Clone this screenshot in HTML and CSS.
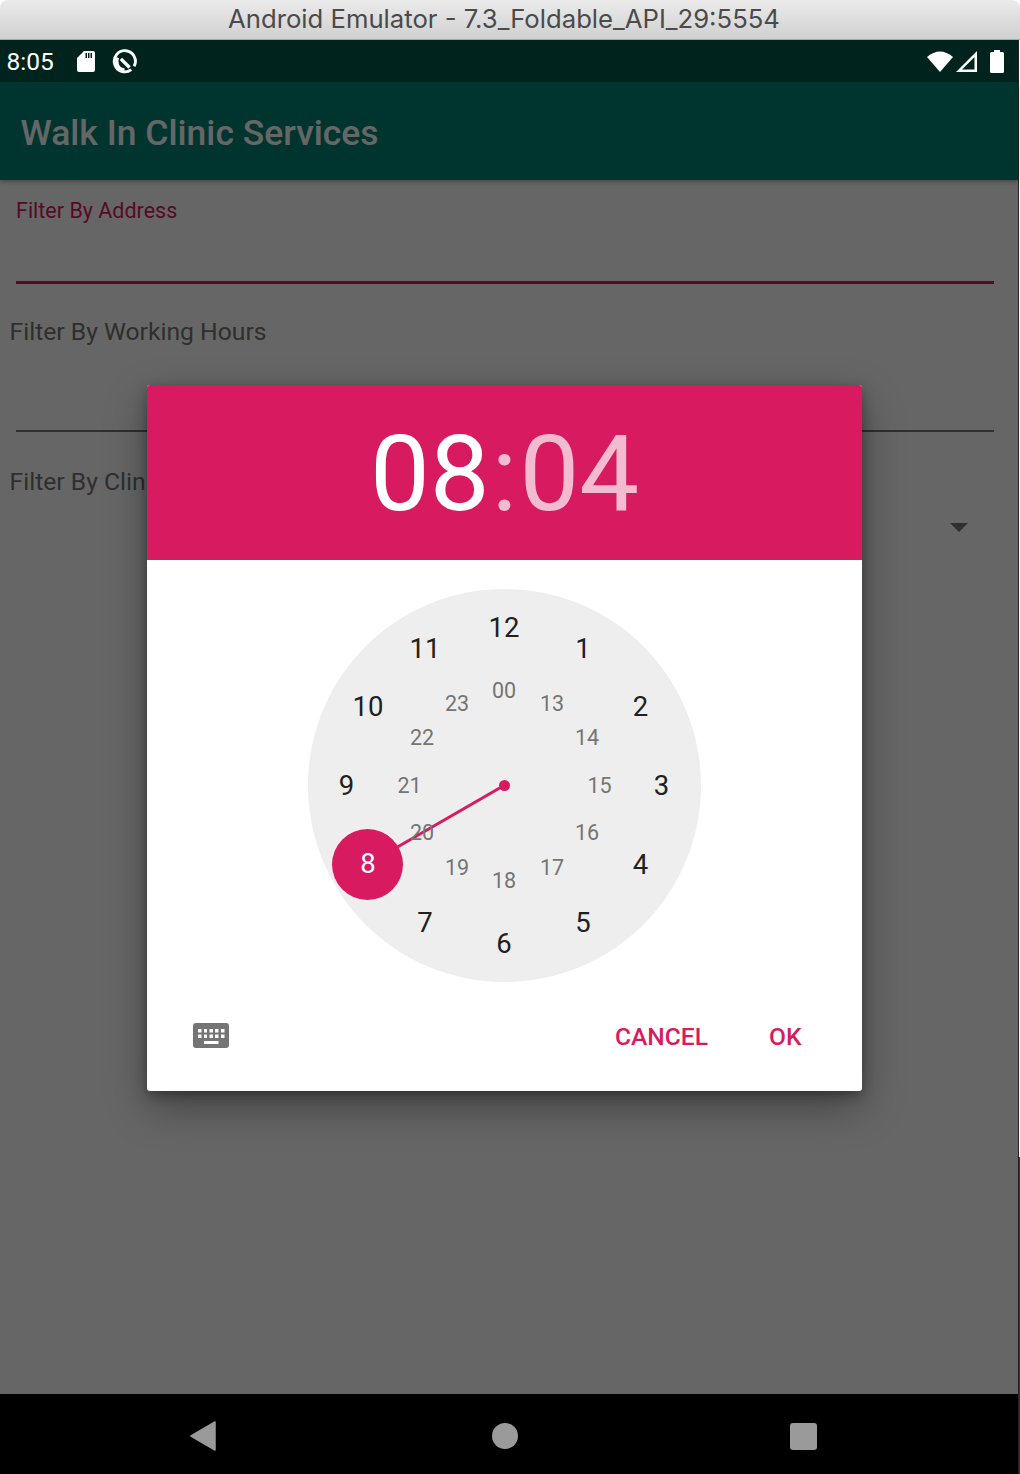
FILE: index.html
```html
<!DOCTYPE html>
<html lang="en">
<head>
    <meta charset="UTF-8">
    <meta name="viewport" content="width=device-width, initial-scale=1.0">
    <title>Android Emulator</title>
    <link rel="stylesheet" href="styles.css">
</head>
<body>
    <div class="window-title">Android Emulator - 7.3_Foldable_API_29:5554</div>

    <div class="device">
        <div class="status-bar">
            <span class="clock-text">8:05</span>
            <svg class="icon-sd" width="18" height="21" viewBox="0 0 18 21">
                <path fill="#fff" fill-rule="evenodd" d="M7 0H16a2 2 0 0 1 2 2V19a2 2 0 0 1-2 2H2a2 2 0 0 1-2-2V7zM8.500 2V7H10V2zM11 2V7H12.500V2zM13.500 2V7H15V2z"/>
            </svg>
            <svg class="icon-q" width="25" height="25" viewBox="0 0 26 26">
                <path fill="none" stroke="#fff" stroke-width="3" d="M20 21.500A11 11 0 1 1 23 18"/>
                <path fill="none" stroke="#fff" stroke-width="3" d="M13 21.500A8.500 8.500 0 0 1 6 9"/>
                <path fill="#fff" d="M8 11.500L10.500 9L19.500 18L17 20.500z"/>
            </svg>
            <div class="status-right">
                <svg class="icon-wifi" width="26" height="21" viewBox="0 0 26 21"><path fill="#fff" d="M0 6Q13-5 26 6L13 21z"/></svg>
                <svg class="icon-signal" width="21" height="21" viewBox="0 0 21 21"><path fill="#fff" fill-rule="evenodd" d="M21 0V21H0zM18.500 6L6 18.500H18.500z"/></svg>
                <svg width="14" height="23" viewBox="0 0 14 23"><path fill="#fff" d="M4 2V0H10V2H12.500A1.500 1.500 0 0 1 14 3.500V21.500A1.500 1.500 0 0 1 12.500 23H1.500A1.500 1.500 0 0 1 0 21.500V3.500A1.500 1.500 0 0 1 1.500 2z"/></svg>
            </div>
        </div>

        <div class="screen">
            <div class="app-bar">Walk In Clinic Services</div>
            <div class="form">
                <div class="field-address">
                    <div class="label-pink">Filter By Address</div>
                </div>
                <div class="label">Filter By Working Hours</div>
                <div class="field-hours"></div>
                <div class="label">Filter By Clinic</div>
                <div class="spinner"><span class="arrow"></span></div>
            </div>

            <div class="scrim">
                <div class="dialog">
                    <div class="dialog-head">
                        <span class="time-on">08</span><span class="time-colon">:</span><span class="time-off">04</span>
                    </div>
                    <div class="dialog-body">
                        <div class="dial">
                            <div class="hand"></div>
                            <div class="hand-dot"></div>
                            <span class="num in p00">00</span>
                            <span class="num in p13">13</span>
                            <span class="num in p14">14</span>
                            <span class="num in p15">15</span>
                            <span class="num in p16">16</span>
                            <span class="num in p17">17</span>
                            <span class="num in p18">18</span>
                            <span class="num in p19">19</span>
                            <span class="num in p20">20</span>
                            <span class="num in p21">21</span>
                            <span class="num in p22">22</span>
                            <span class="num in p23">23</span>
                            <span class="num p12">12</span>
                            <span class="num p1">1</span>
                            <span class="num p2">2</span>
                            <span class="num p3">3</span>
                            <span class="num p4">4</span>
                            <span class="num p5">5</span>
                            <span class="num p6">6</span>
                            <span class="num p7">7</span>
                            <span class="selected">8</span>
                            <span class="num p9">9</span>
                            <span class="num p10">10</span>
                            <span class="num p11">11</span>
                        </div>
                    </div>
                    <div class="dialog-actions">
                        <svg class="icon-keyboard" width="36" height="26" viewBox="0 0 36 26">
                            <path fill="#757575" fill-rule="evenodd" d="M3 0H33a3 3 0 0 1 3 3V22a3 3 0 0 1-3 3H3a3 3 0 0 1-3-3V3a3 3 0 0 1 3-3zM5 6V9.500H8.500V6zM11 6V9.500H14V6zM16.500 6V9.500H20V6zM22 6V9.500H25.500V6zM28 6V9.500H31.500V6zM5 11.500V15H8.500V11.500zM11 11.500V15H14V11.500zM16.500 11.500V15H20V11.500zM22 11.500V15H25.500V11.500zM28 11.500V15H31.500V11.500zM11 18V21H25.500V18z"/>
                        </svg>
                        <span class="btn btn-cancel">CANCEL</span>
                        <span class="btn btn-ok">OK</span>
                    </div>
                </div>
            </div>
        </div>

        <div class="nav-bar">
            <svg class="nav-back" width="26" height="30" viewBox="0 0 26 30"><path fill="#9a9a9a" d="M25 1V29L1 15z" stroke="#9a9a9a" stroke-width="1.500" stroke-linejoin="round"/></svg>
            <div class="nav-home"></div>
            <div class="nav-recent"></div>
        </div>
    </div>
</body>
</html>
```

FILE: styles.css
```css
* {
    box-sizing: border-box;
}

body {
    margin: 0px;
    padding: 0px;
    height: 1474px;
    overflow: hidden;
    background: linear-gradient(#fff 1157px, #333 1157px);
    font-family: Roboto, "Liberation Sans", sans-serif;
    display: flex;
    flex-direction: column;
}

.window-title {
    height: 40px;
    background: linear-gradient(#ebebeb, #d0d0d0);
    border-bottom: 1px solid #a8a8a8;
    border-radius: 8px 8px 0 0;
    color: #4a4a4a;
    font-family: Inter, "Liberation Sans", sans-serif;
    font-size: 25.700px;
    line-height: 38px;
    padding-right: 12px;
    text-align: center;
}

.device {
    width: 1019px;
    flex: 1;
    display: flex;
    flex-direction: column;
    border-right: 1px solid #222;
}

/* status bar */
.status-bar {
    height: 42px;
    background-color: #00231e;
    color: #fff;
    display: flex;
    align-items: center;
    padding-left: 6.500px;
}

.clock-text {
    font-size: 24.500px;
    line-height: 44px;
    margin-top: 1px;
    width: 70.500px;
}

.icon-sd {
    margin-right: 17px;
    margin-top: 1px;
}

.status-right {
    margin-left: auto;
    margin-right: 14px;
    display: flex;
    align-items: center;
}

.icon-wifi {
    margin-right: 3px;
}

.icon-signal {
    margin-right: 13px;
}

/* app content under the scrim */
.screen {
    position: relative;
    flex: 1;
    background-color: #fff;
}

.app-bar {
    height: 98px;
    background-color: #008577;
    color: #fff;
    font-size: 35.500px;
    font-weight: 500;
    line-height: 103px;
    padding-left: 20.500px;
    box-shadow: 0 2px 4px rgba(0, 0, 0, 0.3);
}

.form {
    padding: 0 24px 0 9.500px;
    font-size: 24.700px;
    color: #757575;
}

.field-address {
    height: 104px;
    margin-left: 6.500px;
    padding-top: 18px;
    border-bottom: 3px solid #d81b60;
}

.label-pink {
    font-size: 21.500px;
    color: #d81b60;
}

.label {
    height: 32px;
    line-height: 32px;
}

.form .label:nth-child(2) {
    margin-top: 32px;
}

.field-hours {
    height: 84px;
    margin-left: 6.500px;
    border-bottom: 2px solid #757575;
}

.form .label:nth-child(4) {
    margin-top: 34px;
}

.spinner {
    display: flex;
    justify-content: flex-end;
    padding: 25px 26px 0 0;
}

.arrow {
    width: 0;
    height: 0;
    border-left: 9px solid transparent;
    border-right: 9px solid transparent;
    border-top: 9px solid #757575;
}

/* dialog */
.scrim {
    position: absolute;
    top: 0;
    left: 0;
    right: 0;
    bottom: 0;
    background-color: rgba(0, 0, 0, 0.6);
    padding-left: 147px;
    padding-top: 303px;
}

.dialog {
    width: 715px;
    height: 706px;
    background-color: #fff;
    border-radius: 3px;
    box-shadow: 0 16px 40px rgba(0, 0, 0, 0.35), 0 4px 12px rgba(0, 0, 0, 0.3);
}

.dialog-head {
    height: 175px;
    background-color: #d81b60;
    border-radius: 3px 3px 0 0;
    color: #fff;
    font-size: 106.500px;
    line-height: 178px;
    overflow: hidden;
    text-align: center;
}

.time-colon,
.time-off {
    color: #f3bbcf;
}

.time-colon {
    margin: 0 2px;
}

.dialog-body {
    padding: 29px 0 0 161px;
    height: 420px;
}

.dial {
    position: relative;
    width: 392.500px;
    height: 392.500px;
    border-radius: 50%;
    background-color: #eeeeee;
}

.num {
    position: absolute;
    transform: translate(-50%, -50%);
    margin-top: 1px;
    font-size: 27.500px;
    line-height: 34px;
    color: #212121;
}

.in {
    font-size: 21.500px;
    color: #757575;
}

/* dial positions, from the dial's top left corner */
.p12 { left: 196px; top: 38px; }
.p1 { left: 275px; top: 59px; }
.p2 { left: 332.500px; top: 116.500px; }
.p3 { left: 353.500px; top: 195.500px; }
.p4 { left: 332.500px; top: 274.500px; }
.p5 { left: 275px; top: 332.500px; }
.p6 { left: 196px; top: 353.500px; }
.p7 { left: 117px; top: 332.500px; }
.p9 { left: 38.500px; top: 195.500px; }
.p10 { left: 60px; top: 116.500px; }
.p11 { left: 117px; top: 59px; }

.p00 { left: 196px; top: 101px; }
.p13 { left: 244px; top: 114px; }
.p14 { left: 279px; top: 148px; }
.p15 { left: 291.500px; top: 195.500px; }
.p16 { left: 279px; top: 243px; }
.p17 { left: 244px; top: 278px; }
.p18 { left: 196px; top: 290.500px; }
.p19 { left: 149px; top: 278px; }
.p20 { left: 114px; top: 243px; }
.p21 { left: 101.500px; top: 195.500px; }
.p22 { left: 114px; top: 148px; }
.p23 { left: 149px; top: 114px; }

.selected {
    position: absolute;
    left: 24px;
    top: 239.500px;
    width: 71px;
    height: 71px;
    border-radius: 50%;
    background-color: #d81b60;
    color: #fff;
    font-size: 27.500px;
    line-height: 70px;
    text-align: center;
    padding-left: 1px;
}

.hand {
    position: absolute;
    left: 196px;
    top: 195px;
    width: 158px;
    height: 3px;
    background-color: #d81b60;
    transform-origin: 0 50%;
    transform: rotate(150deg);
}

.hand-dot {
    position: absolute;
    left: 191px;
    top: 191px;
    width: 11px;
    height: 11px;
    border-radius: 50%;
    background-color: #d81b60;
}

.dialog-actions {
    position: relative;
    height: 111px;
    display: flex;
    align-items: center;
    padding-left: 46px;
    padding-top: 1px;
}

.icon-keyboard {
    margin-top: -1px;
}

.btn {
    color: #d81b60;
    font-size: 24.600px;
    font-weight: 500;
}

.btn-cancel {
    margin-left: auto;
}

.btn-ok {
    margin-left: 61px;
    margin-right: 60.500px;
}

/* navigation bar */
.nav-bar {
    height: 80px;
    background-color: #000;
    position: relative;
    display: flex;
    align-items: center;
    padding-left: 190px;
    padding-top: 4px;
}

.nav-home {
    width: 26px;
    height: 26px;
    border-radius: 50%;
    background-color: #9a9a9a;
    margin-left: 276px;
}

.nav-recent {
    width: 27px;
    height: 27px;
    border-radius: 3px;
    background-color: #9a9a9a;
    margin-left: 272px;
}
```
